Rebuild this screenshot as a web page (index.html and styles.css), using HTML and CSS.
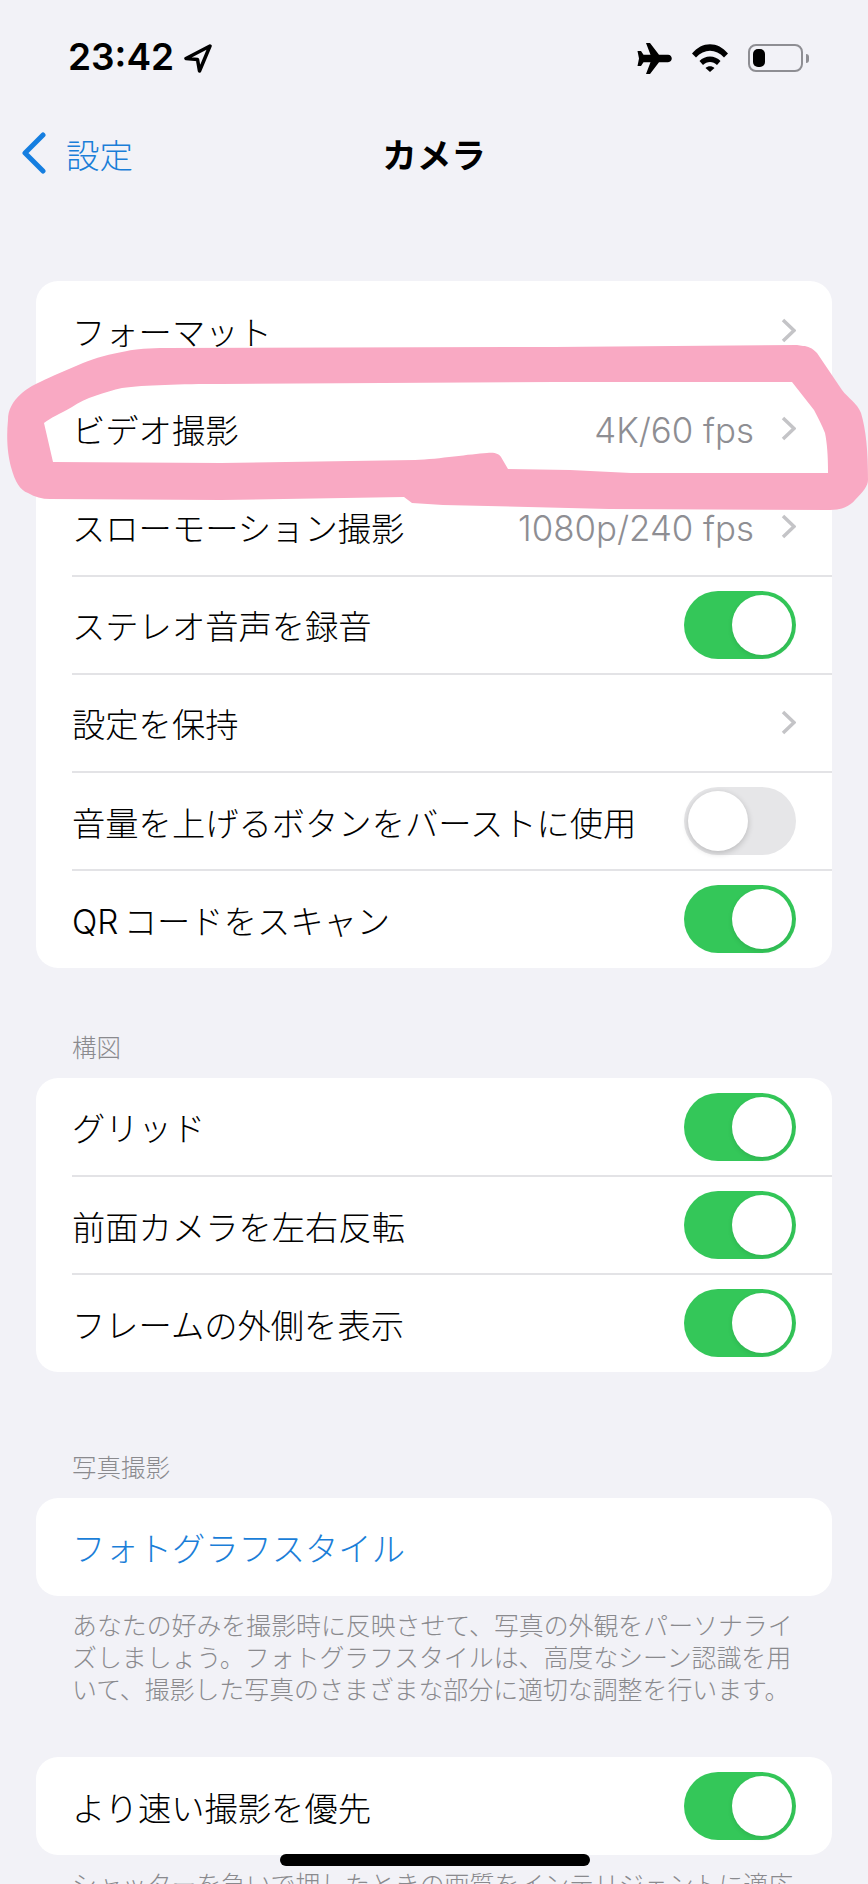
FILE: index.html
```html
<!DOCTYPE html>
<html lang="ja">
<head>
    <meta charset="UTF-8">
    <title>カメラ</title>
    <meta name="viewport" content="width=device-width, initial-scale=1.0">
    <link rel="stylesheet" href="styles.css">
</head>
<body>
<div class="phone">
    <div class="statusbar">
        <div class="status-left">
            <span class="clock">23:42</span>
            <svg width="28" height="29" viewBox="0 0 28 29"><path d="M26 2 L2 14.500 L13.500 15.500 L15.500 27 Z" fill="none" stroke="#000" stroke-width="3.500" stroke-linejoin="round"/></svg>
        </div>
        <div class="status-right">
            <svg width="35" height="31" viewBox="0 0 35 31"><path d="M9 0 L13 0 L22 11.800 L31 11.800 C36 12 36 19 31 19.200 L22 19.200 L13 31 L9 31 L13.500 19.200 L6.500 19.200 L4 23 L0.500 23 L2 15.500 L0.500 8 L4 8 L6.500 11.800 L13.500 11.800 Z" fill="#000"/></svg>
            <svg width="36" height="28" viewBox="0 0 36 28"><path d="M0 9.500 C10 -3 26 -3 36 9.500 L32 13.500 C24 4.500 12 4.500 4 13.500 Z M7.500 17 C13 11 23 11 28.500 17 L25 21 C21 17 15 17 11 21 Z M13.500 24 C16 21.500 20 21.500 22.500 24 L18 28 Z" fill="#000"/></svg>
            <div class="battery-wrap">
                <div class="battery"><div class="battery-level"></div></div>
                <div class="battery-cap"></div>
            </div>
        </div>
    </div>

    <div class="navbar">
        <div class="back">
            <svg width="25" height="42" viewBox="0 0 25 42"><path d="M22 3 L4 21 L22 39" fill="none" stroke="#157ee0" stroke-width="5" stroke-linecap="round" stroke-linejoin="round"/></svg>
            <span>設定</span>
        </div>
        <div class="nav-title">カメラ</div>
    </div>

    <div class="group first">
        <div class="row"><span class="label">フォーマット</span><svg class="chev" width="15" height="25" viewBox="0 0 15 25"><path d="M2 2 L13 12.500 L2 23" fill="none" stroke="#c4c4c7" stroke-width="3.500"/></svg></div>
        <div class="row"><span class="label">ビデオ撮影</span><span class="value">4K/60 fps</span><svg class="chev" width="15" height="25" viewBox="0 0 15 25"><path d="M2 2 L13 12.500 L2 23" fill="none" stroke="#c4c4c7" stroke-width="3.500"/></svg></div>
        <div class="row"><span class="label">スローモーション撮影</span><span class="value">1080p/240 fps</span><svg class="chev" width="15" height="25" viewBox="0 0 15 25"><path d="M2 2 L13 12.500 L2 23" fill="none" stroke="#c4c4c7" stroke-width="3.500"/></svg></div>
        <div class="row"><span class="label">ステレオ音声を録音</span><span class="toggle on"></span></div>
        <div class="row"><span class="label">設定を保持</span><svg class="chev" width="15" height="25" viewBox="0 0 15 25"><path d="M2 2 L13 12.500 L2 23" fill="none" stroke="#c4c4c7" stroke-width="3.500"/></svg></div>
        <div class="row"><span class="label">音量を上げるボタンをバーストに使用</span><span class="toggle"></span></div>
        <div class="row"><span class="label">QR コードをスキャン</span><span class="toggle on"></span></div>
    </div>

    <div class="section-head">構図</div>
    <div class="group">
        <div class="row"><span class="label">グリッド</span><span class="toggle on"></span></div>
        <div class="row"><span class="label">前面カメラを左右反転</span><span class="toggle on"></span></div>
        <div class="row"><span class="label">フレームの外側を表示</span><span class="toggle on"></span></div>
    </div>

    <div class="section-head wide">写真撮影</div>
    <div class="group">
        <div class="row"><span class="label link">フォトグラフスタイル</span></div>
    </div>
    <p class="note">あなたの好みを撮影時に反映させて、写真の外観をパーソナライズしましょう。フォトグラフスタイルは、高度なシーン認識を用いて、撮影した写真のさまざまな部分に適切な調整を行います。</p>

    <div class="group spaced">
        <div class="row"><span class="label">より速い撮影を優先</span><span class="toggle on"></span></div>
    </div>
    <p class="note">シャッターを急いで押したときの画質をインテリジェントに適応</p>

    <!-- marker scribble drawn around the video row -->
    <svg class="scribble" width="868" height="600" viewBox="0 0 868 600">
        <path fill="#f9a9c3" fill-rule="evenodd" d="M797 345 L554 347 L166 348 C150 348 135 349 127 351 C110 354 95 358 83 363 L55 375 C40 382 30 386 22 393 C12 402 8 410 8 420 C6 440 8 455 11 467 C15 482 20 490 28 493 C35 497 42 499 50 499 L221 500 L404 497 L412 503 L443 505 L609 509 L830 510 C842 510 850 506 855 500 C863 492 868 486 868 480 C868 450 866 430 861 413 C857 403 848 398 842 390 L817 353 C812 348 808 346 803 346 Z
        M792 382 L554 382 L221 384 C180 384 145 385 122 388 C105 392 85 398 72 407 C60 414 50 418 44 423 L53 462 L221 463 L415 460 C440 459 470 454 487 453 C495 452 499 454 501 457 L508 469 L570 470 L631 473 L828 473 C828 455 827 443 825 433 C822 425 818 418 814 410 Z"/>
    </svg>

    <div class="home-bar"></div>
</div>
</body>
</html>
```

FILE: styles.css
```css
* {
    box-sizing: border-box;
}
body {
    margin: 0;
    background: #f2f2f7;
    font-family: Inter, "Noto Sans CJK JP", sans-serif;
}
.phone {
    position: relative;
    width: 868px;
    height: 1884px;
    overflow: hidden;
    background: #f2f2f7;
}
.statusbar {
    display: flex;
    justify-content: space-between;
    align-items: center;
    height: 60px;
    margin-top: 28px;
    padding: 0 59px 0 68px;
}
.status-left {
    display: flex;
    align-items: center;
    gap: 10px;
}
.clock {
    font-size: 37px;
    line-height: 58px;
    height: 60px;
    font-weight: 600;
    color: #000;
}
.status-right {
    display: flex;
    align-items: center;
    gap: 20px;
}
.battery-wrap {
    display: flex;
    align-items: center;
    gap: 3px;
}
.battery {
    width: 55px;
    height: 28px;
    padding: 3px 3px;
    border: 2px solid #8e8e93;
    border-radius: 8px;
}
.battery-level {
    width: 12px;
    height: 100%;
    background: #000;
    border-radius: 5px;
}
.battery-cap {
    width: 3px;
    height: 9px;
    background: #8e8e93;
    border-radius: 0 3px 3px 0;
}
.navbar {
    display: grid;
    grid-template-columns: 1fr auto 1fr;
    align-items: center;
    height: 70px;
    margin-top: 30px;
}
.back {
    display: flex;
    align-items: center;
    gap: 20px;
    padding-left: 21px;
    color: #1a7ed8;
    font-size: 33.500px;
    font-weight: 300;
}
.nav-title {
    font-size: 34.500px;
    font-weight: 700;
    color: #000;
}
.group {
    margin: 0 36px;
    background: #fff;
    border-radius: 22px;
    overflow: hidden;
}
.group.first {
    margin-top: 93px;
}
.group.spaced {
    margin-top: 51px;
}
.row {
    position: relative;
    display: flex;
    align-items: center;
    height: 98.200px;
    padding: 0 36px;
}
.row + .row::before {
    content: "";
    position: absolute;
    top: -1px;
    left: 36px;
    right: 0;
    height: 2px;
    background: #e3e3e6;
}
.label {
    flex: 1;
    font-size: 33.300px;
    font-weight: 300;
    word-spacing: -4px;
    color: #000;
    white-space: nowrap;
}
.label.link {
    color: #1a7ed8;
}
.value {
    font-size: 34.800px;
    font-weight: 300;
    padding-top: 3px;
    color: #8e8e93;
    margin-right: 27px;
}
.toggle {
    position: relative;
    width: 112px;
    height: 68px;
    border-radius: 34px;
    background: #e6e6e8;
}
.toggle::after {
    content: "";
    position: absolute;
    top: 4px;
    left: 4px;
    width: 60px;
    height: 60px;
    border-radius: 50%;
    background: #fff;
    box-shadow: 0 2px 6px rgba(0,0,0,0.2);
}
.toggle.on {
    background: #34c759;
}
.toggle.on::after {
    left: 48px;
    box-shadow: 0 2px 5px rgba(0,0,0,0.1);
}
.section-head {
    margin: 63.500px 36px 14px;
    padding-left: 36px;
    font-size: 24.500px;
    font-weight: 300;
    line-height: 32px;
    color: #8a8a8e;
}
.section-head.wide {
    margin-top: 79.500px;
}
.note {
    margin: 14px 36px 0;
    padding: 0 36px;
    font-size: 24.900px;
    font-weight: 300;
    line-height: 32px;
    color: #8a8a8e;
}
.scribble {
    position: absolute;
    left: 0;
    top: 0;
}
.home-bar {
    position: absolute;
    left: 280px;
    top: 1854px;
    width: 310px;
    height: 12px;
    background: #000;
    border-radius: 6px;
}
```
